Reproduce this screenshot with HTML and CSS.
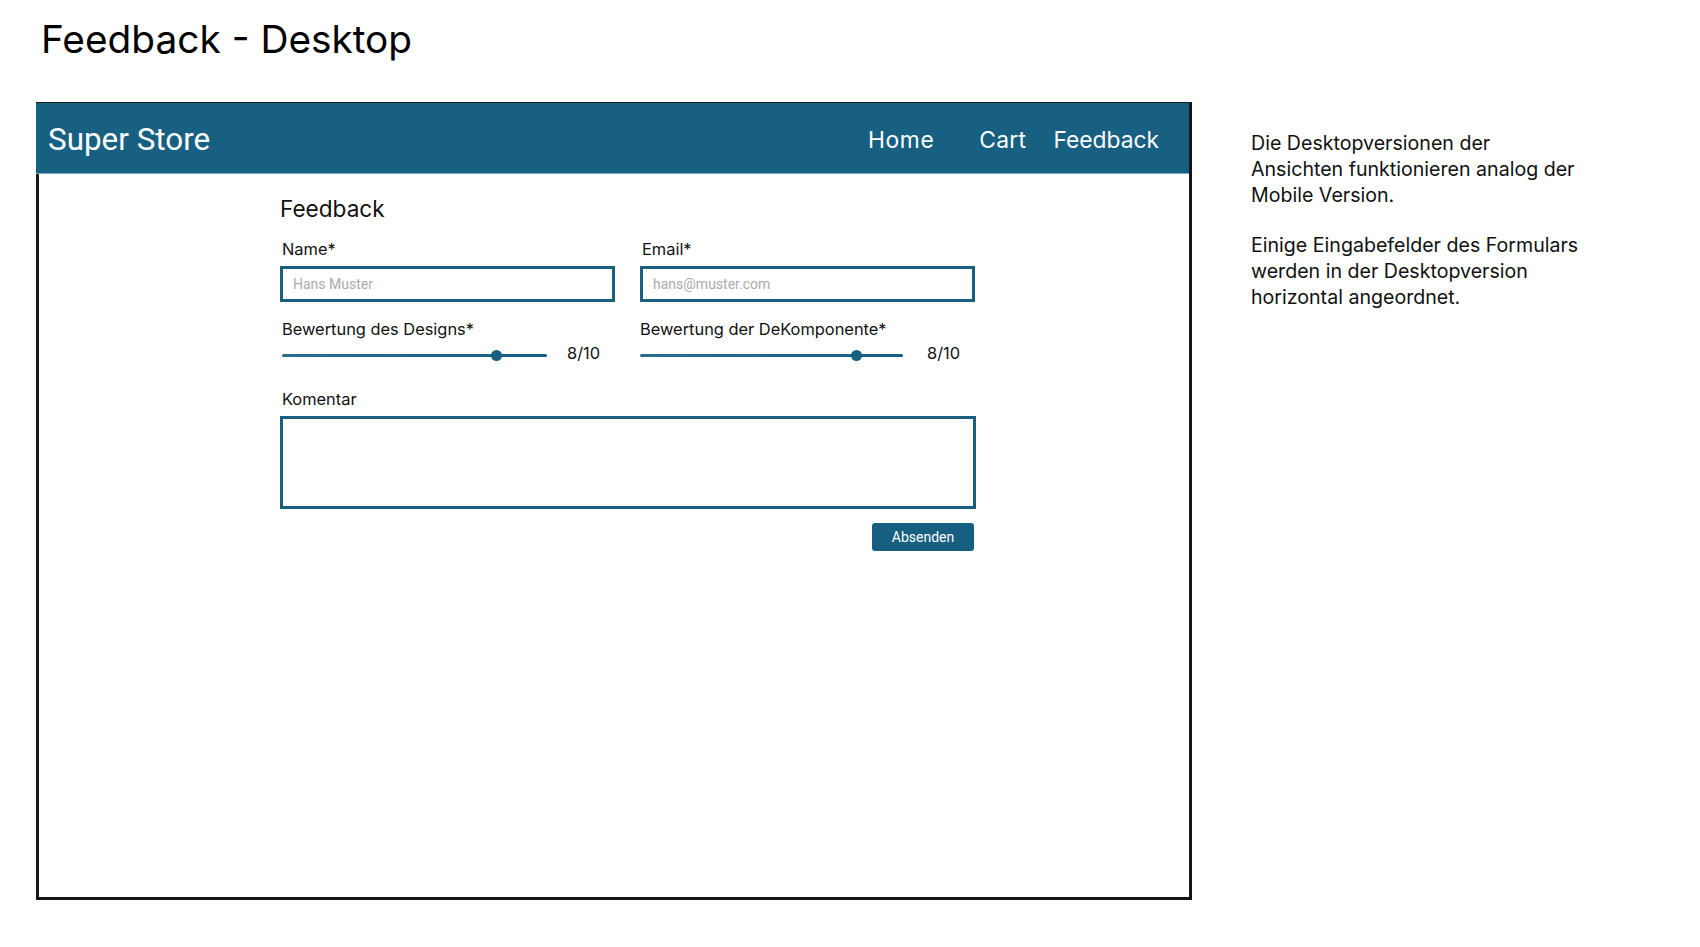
FILE: index.html
```html
<!DOCTYPE html>
<html lang="de">
<head>
<meta charset="utf-8">
<title>Feedback - Desktop</title>
<link rel="stylesheet" href="styles.css">
</head>
<body>
<div class="slide">
  <div class="mock">
    <h1 class="slide-title">Feedback - Desktop</h1>
    <div class="frame">
      <header class="topbar">
        <div class="brand">Super Store</div>
        <nav class="nav">
          <a class="nav-link nav-home">Home</a>
          <a class="nav-link nav-cart">Cart</a>
          <a class="nav-link nav-feedback">Feedback</a>
        </nav>
      </header>
      <main class="content">
        <form class="form">
          <h2 class="form-title">Feedback</h2>
          <div class="row row-inputs">
            <div class="field">
              <label class="label">Name*</label>
              <input class="input" type="text" placeholder="Hans Muster">
            </div>
            <div class="field">
              <label class="label">Email*</label>
              <input class="input" type="text" placeholder="hans@muster.com">
            </div>
          </div>
          <div class="row row-ratings">
            <div class="field">
              <label class="label">Bewertung des Designs*</label>
              <div class="slider-row">
                <div class="track"><span class="thumb" style="left:81%"></span></div>
                <span class="value">8/10</span>
              </div>
            </div>
            <div class="field field-second">
              <label class="label label-flush">Bewertung der DeKomponente*</label>
              <div class="slider-row slider-row-second">
                <div class="track track-second"><span class="thumb" style="left:82.5%"></span></div>
                <span class="value">8/10</span>
              </div>
            </div>
          </div>
          <label class="label label-comment">Komentar</label>
          <textarea class="textarea"></textarea>
          <div class="actions">
            <button class="button" type="button">Absenden</button>
          </div>
        </form>
      </main>
    </div>
  </div>
  <aside class="notes">
    <p class="note">Die Desktopversionen der<br>Ansichten funktionieren analog der<br>Mobile Version.</p>
    <p class="note">Einige Eingabefelder des Formulars<br>werden in der Desktopversion<br>horizontal angeordnet.</p>
  </aside>
</div>
</body>
</html>
```

FILE: styles.css
```css
* { box-sizing: border-box; }

html, body {
  margin: 0;
  padding: 0;
  background: #ffffff;
}

body {
  font-family: "Inter", "Noto Sans", sans-serif;
  color: #111111;
}

.slide {
  display: flex;
  align-items: flex-start;
  padding-left: 36px;
  width: 1700px;
  height: 947px;
}

.mock {
  width: 1156px;
  flex: none;
}

.slide-title {
  margin: 19px 0 43px 5px;
  font-size: 38.8px;
  line-height: 40px;
  font-weight: 400;
  color: #000000;
}

.frame {
  height: 798px;
  border: 3px solid #161616;
  border-top: 1px solid #1c1c1c;
}

.topbar {
  height: 71px;
  margin-left: -3px;
  background: #176082;
  border-bottom: 1px solid #7fa9c0;
  display: flex;
  align-items: center;
  justify-content: space-between;
  padding: 0 30px 0 12px;
  color: #ffffff;
}

.brand {
  font-family: "Roboto", sans-serif;
  font-size: 31.4px;
  line-height: 36px;
  margin-top: 4px;
}

.nav {
  display: flex;
  align-items: center;
  margin-top: 4px;
}

.nav-link {
  font-size: 22.8px;
  line-height: 28px;
  color: #ffffff;
}

.nav-home { letter-spacing: 0.6px; }
.nav-cart { margin-left: 45px; letter-spacing: 0.3px; }
.nav-feedback { margin-left: 27px; }

.content {
  padding: 22px 0 0 241px;
}

.form {
  width: 698px;
}

.form-title {
  margin: 0 0 17px 0;
  font-size: 22.6px;
  line-height: 26px;
  font-weight: 400;
}

.row {
  display: grid;
  grid-template-columns: 335px 335px;
  column-gap: 25px;
}

.row-inputs { margin-bottom: 17px; }

.field {
  display: flex;
  flex-direction: column;
}

.label {
  display: block;
  font-size: 16.4px;
  line-height: 20px;
  padding-left: 2px;
  color: #111111;
}

.label-flush { padding-left: 0; }

.row-inputs .label { margin-bottom: 7px; }

.input {
  height: 36px;
  width: 335px;
  border: 3px solid #1a5f80;
  border-radius: 0;
  padding: 0 10px;
  font-family: "Roboto", sans-serif;
  font-size: 14px;
  color: #333333;
  background: #ffffff;
  outline: none;
}

.input::placeholder { color: #ababab; }

.slider-row {
  display: flex;
  align-items: center;
  height: 28px;
  gap: 20px;
}

.slider-row-second { gap: 24px; }

.track {
  position: relative;
  width: 265px;
  height: 3px;
  margin-top: 4px;
  margin-left: 2px;
  background: linear-gradient(90deg, #2a6d8e, #175f81);
  border-radius: 2px;
}

.track-second {
  width: 263px;
  margin-left: 0;
}

.thumb {
  position: absolute;
  top: 50%;
  width: 11px;
  height: 11px;
  margin: -5.5px 0 0 -5.5px;
  border-radius: 50%;
  background: #175f81;
}

.value {
  font-size: 16.4px;
  line-height: 20px;
}

.label-comment {
  margin-top: 22px;
  margin-bottom: 7px;
}

.textarea {
  display: block;
  width: 696px;
  height: 93px;
  border: 3px solid #1a5f80;
  border-radius: 0;
  resize: none;
  outline: none;
  padding: 8px 10px;
  font-family: "Roboto", sans-serif;
  font-size: 14px;
}

.actions {
  display: flex;
  justify-content: flex-end;
  margin-top: 14px;
  padding-right: 4px;
}

.button {
  width: 102px;
  height: 28px;
  border: none;
  border-radius: 3px;
  background: #175f81;
  color: #ffffff;
  font-family: "Roboto", sans-serif;
  font-size: 14px;
  padding: 0;
}

.notes {
  margin: 130px 0 0 59px;
}

.note {
  margin: 0 0 24px 0;
  font-size: 19.6px;
  line-height: 26px;
  color: #111111;
}
```
